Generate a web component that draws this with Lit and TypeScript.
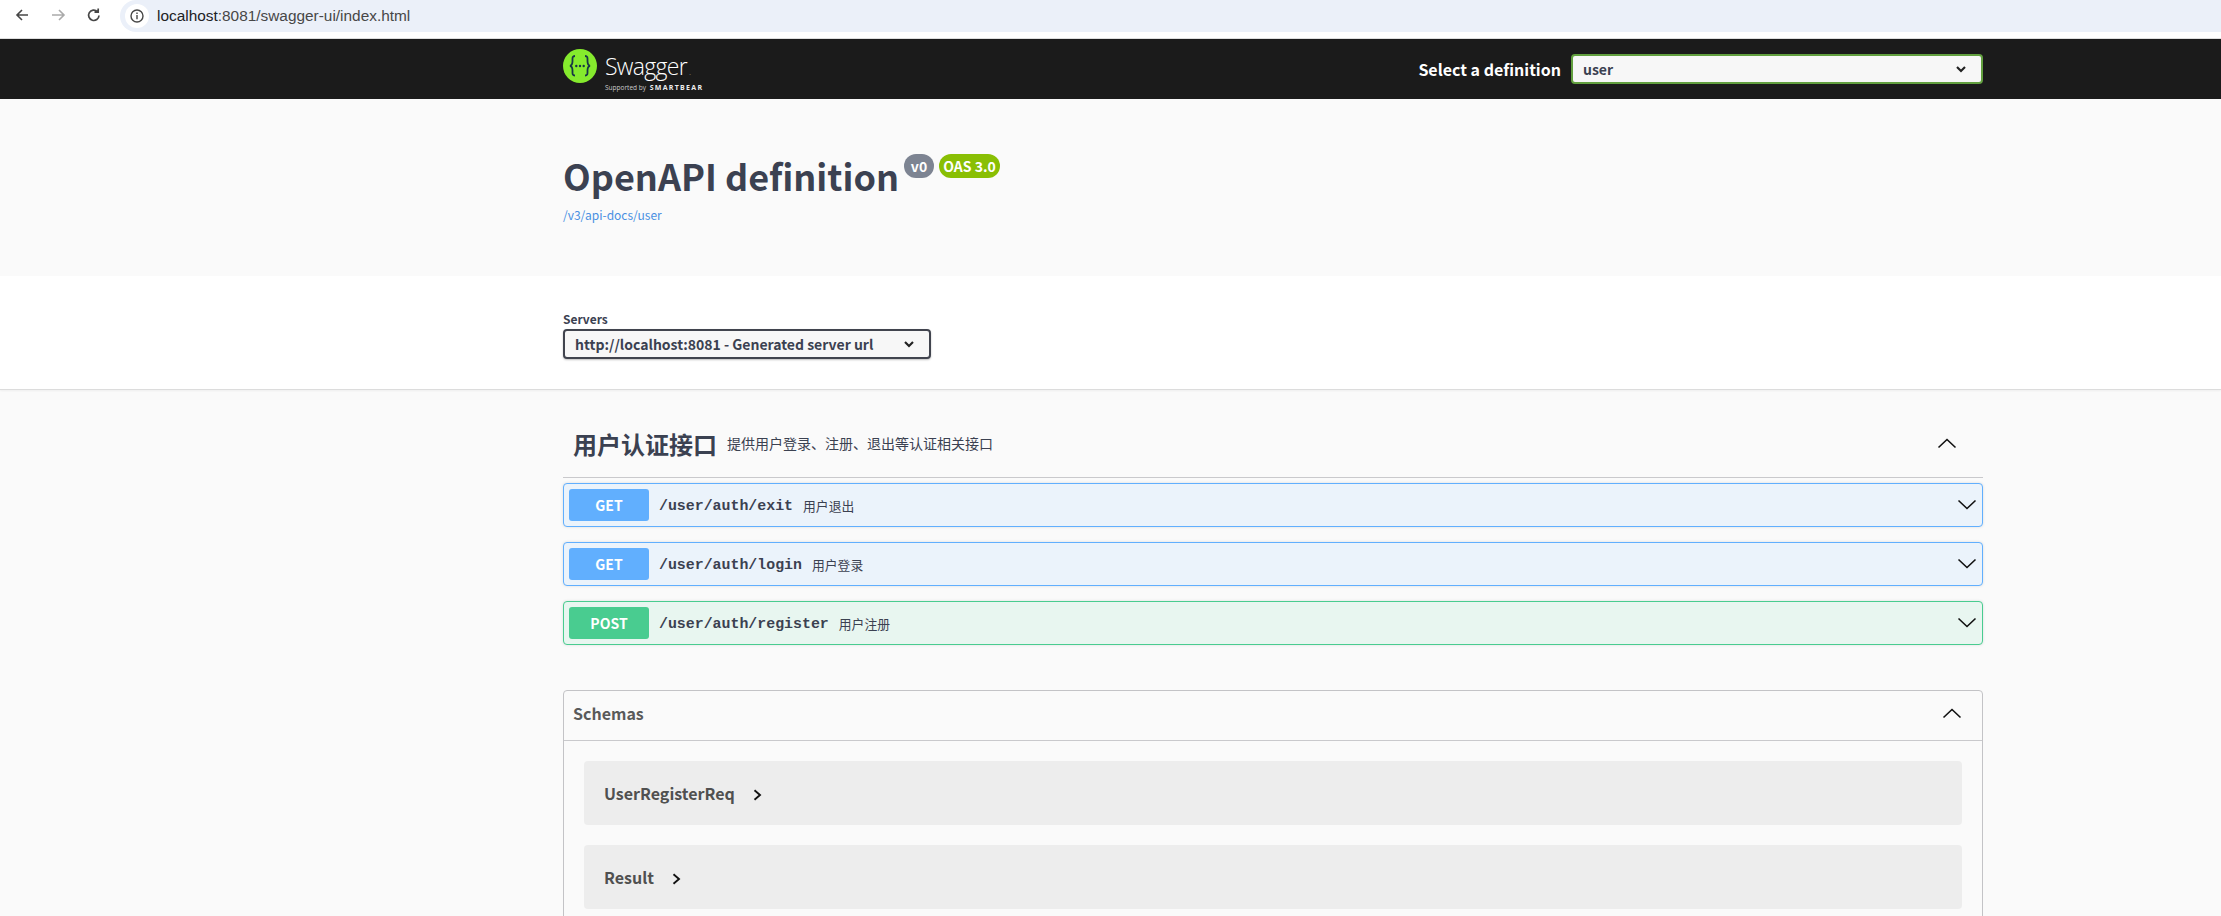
import { LitElement, html, css } from "lit";
import { customElement } from "lit/decorators.js";

const chevDown = html`<svg class="chev" viewBox="0 0 20 20"><path d="M1.5 5.5 L10 13.5 L18.5 5.5" fill="none" stroke="#111" stroke-width="1.6"/></svg>`;
const chevUp = html`<svg class="chev up" viewBox="0 0 20 20"><path d="M1.5 14.5 L10 6.5 L18.5 14.5" fill="none" stroke="#111" stroke-width="1.6"/></svg>`;
const small = html`<svg class="small" viewBox="0 0 12 12"><path d="M3 4.5 L6 7.5 L9 4.5" fill="none" stroke="#222" stroke-width="1.6"/></svg>`;
const right = html`<svg class="right" viewBox="0 0 12 12"><path d="M2.500 1.200 L8 6 L2.500 10.800" fill="none" stroke="#111" stroke-width="1.9"/></svg>`;

const ops = [
  { m: "GET", p: "/user/auth/exit", d: "用户退出", c: "get" },
  { m: "GET", p: "/user/auth/login", d: "用户登录", c: "get" },
  { m: "POST", p: "/user/auth/register", d: "用户注册", c: "post" },
];

@customElement("app-root")
export class AppRoot extends LitElement {
  static styles = css`
    :host { display: block; height: 916px; overflow: hidden; background: #fafafa; font-family: "Noto Sans CJK SC", "Noto Sans", sans-serif; color: #3b4151; }
    .browser { height: 38px; background: #fff; display: flex; align-items: flex-start; border-bottom: 1px solid #dedede; }
    .navs { display: flex; width: 120px; gap: 16px; padding: 5px 0 0 12px; box-sizing: border-box; flex: none; }
    .navs svg { width: 20px; height: 20px; flex: none; }
    .url { flex: 1; height: 32px; background: #ebf0f9; border-radius: 16px 0 0 16px; display: flex; align-items: center; font: 15.4px/32px "Liberation Sans", sans-serif; color: #202124; padding-left: 5px; }
    .info { width: 24px; height: 24px; border-radius: 50%; background: #fff; display: flex; align-items: center; justify-content: center; margin-right: 8px; }
    .info svg { width: 16px; height: 16px; }
    .rest { color: #474747; }
    .topbar { height: 60px; background: #1b1b1b; }
    .wrap { width: 1422px; margin-left: 561px; box-sizing: border-box; padding-left: 2px; }
    .topbar .wrap { height: 60px; display: flex; align-items: center; justify-content: space-between; }
    .logo { display: flex; align-items: flex-start; gap: 8px; color: #fff; }
    .logo svg { width: 34px; height: 34px; flex: none; margin-top: 3px; }
    .logo-text { display: flex; flex-direction: column; font-family: "Open Sans", sans-serif; }
    .logo-text .s { font-size: 23px; line-height: 26px; font-weight: 300; letter-spacing: -0.7px; margin-top: 7px; white-space: nowrap; }
    .logo-text .s i { font-style: normal; font-size: 9px; color: #999; margin-left: 2px; }
    .logo-text .b { font-size: 6.500px; line-height: 10px; white-space: nowrap; color: #ccc; margin-top: -2px; }
    .logo-text .b em { font-style: normal; font-weight: 700; letter-spacing: 1.300px; font-size: 7px; color: #eee; margin-left: 2px; }
    .select-def { display: flex; align-items: center; gap: 10px; color: #fff; font-size: 16px; font-weight: 700; }
    .def { width: 412px; height: 30px; box-sizing: border-box; border: 2px solid #62a03f; border-radius: 4px; background: #f7f7f7; color: #3b4151; display: flex; align-items: center; justify-content: space-between; padding: 0 12px 0 10px; font-size: 14px; font-weight: 700; }
    .small { width: 16px; height: 16px; flex: none; }
    .info-sec { height: 177px; padding-top: 52px; }
    .title-row { display: flex; align-items: flex-start; }
    h1 { margin: 0; font-size: 36px; line-height: 48px; font-weight: 700; color: #3b4151; }
    .badge { margin-top: 3px; height: 24px; border-radius: 12px; color: #fff; font-size: 14px; font-weight: 700; line-height: 24px; text-align: center; }
    .v0 { background: #7d8492; width: 30px; margin-left: 5px; }
    .oas { background: #89bf04; width: 61px; margin-left: 5px; }
    .link { font-size: 12px; line-height: 18px; color: #4990e2; margin-top: 7px; }
    .servers { background: #fff; height: 114px; box-sizing: border-box; padding-top: 35px; border-bottom: 1px solid #dcdcdc; box-shadow: 0 1px 2px rgba(0,0,0,.05); }
    .servers label { display: block; font-size: 12px; font-weight: 700; line-height: 16px; }
    .srv { margin-top: 2px; width: 368px; height: 30px; box-sizing: border-box; border: 2px solid #41444e; border-radius: 4px; background: #f7f7f7; display: flex; align-items: center; justify-content: space-between; padding: 0 12px 0 10px; font-size: 14px; font-weight: 700; box-shadow: 0 1px 2px rgba(0,0,0,.25); white-space: nowrap; }
    .tag { display: flex; align-items: center; height: 88px; box-sizing: border-box; padding: 20px 0 0 10px; border-bottom: 1px solid #c9c9cc; }
    .tag h3 { margin: 0; font-size: 24px; font-weight: 700; line-height: 32px; }
    .tag small { font-size: 14px; font-weight: 400; margin: -1px 0 0 10px; color: #3b4151; }
    .tag .sp { flex: 1; }
    .chev { width: 20px; height: 20px; flex: none; }
    .tag .chev { margin-right: 26px; margin-top: -1px; }
    .ops { display: flex; flex-direction: column; gap: 15px; padding-top: 5px; }
    .op { height: 44px; box-sizing: border-box; border: 1px solid; border-radius: 4px; display: flex; align-items: center; padding: 0 4px 0 5px; box-shadow: 0 0 3px rgba(0,0,0,.12); }
    .op.get { background: #ebf3fb; border-color: #61affe; }
    .op.post { background: #e8f6f0; border-color: #49cc90; }
    .m { width: 80px; height: 32px; border-radius: 3px; color: #fff; font-size: 14px; font-weight: 700; line-height: 32px; text-align: center; flex: none; }
    .get .m { background: #61affe; }
    .post .m { background: #49cc90; }
    .p { font-family: "Liberation Mono", monospace; font-size: 14.900px; font-weight: 700; margin: 1px 0 0 10px; color: #3b4151; }
    .d { font-size: 12.800px; margin-left: 10px; flex: 1; color: #3b4151; }
    .op .chev { margin-right: 1px; }
    .schemas { margin-top: 45px; border: 1px solid #c3c3c6; border-radius: 4px; height: 400px; }
    .sch-head { height: 49px; display: flex; align-items: center; justify-content: space-between; padding: 0 20px 0 9px; border-bottom: 1px solid #c9c9cc; font-size: 16px; font-weight: 700; color: #5a5a5a; }
    .sch-head span { margin-top: -5px; }
    .sch-head .chev { margin-top: -5px; }
    .sch-body { padding: 20px; display: flex; flex-direction: column; gap: 20px; }
    .sch { height: 64px; background: #ededed; border-radius: 4px; display: flex; align-items: center; padding-left: 20px; font-size: 16px; font-weight: 700; color: #505050; }
    .right { width: 12px; height: 12px; margin: 3px 0 0 17px; }
  `;

  render() {
    return html`
      <div class="browser">
        <div class="navs">
          <svg viewBox="0 0 20 20"><path d="M16 10H5M10 5l-5 5 5 5" fill="none" stroke="#474747" stroke-width="1.6"/></svg>
          <svg viewBox="0 0 20 20"><path d="M4 10h12M11 5l5 5-5 5" fill="none" stroke="#aaa" stroke-width="1.6"/></svg>
          <svg viewBox="0 0 20 20"><path d="M15 10.500a5.200 5.200 0 1 1-1.600-4M14.200 3.500v3.700h-3.700" fill="none" stroke="#474747" stroke-width="1.700"/></svg>
        </div>
        <div class="url">
          <div class="info"><svg viewBox="0 0 16 16"><circle cx="8" cy="8" r="6" fill="none" stroke="#474747" stroke-width="1.4"/><path d="M8 7v4.200M8 4.600v1.500" stroke="#474747" stroke-width="1.4"/></svg></div>
          <span>localhost</span><span class="rest">:8081/swagger-ui/index.html</span>
        </div>
      </div>
      <div class="topbar"><div class="wrap">
        <div class="logo">
          <svg viewBox="0 0 34 34"><circle cx="17" cy="17" r="17" fill="#85ea2d"/><g fill="none" stroke="#173646" stroke-width="1.800"><path d="M12 7c-3 0-2.500 2-2.500 5s-.3 4.300-2.500 4.800c2.200.5 2.500 1.700 2.500 4.700s-.5 5 2.500 5M22 7c3 0 2.500 2 2.500 5s.3 4.300 2.500 4.800c-2.200.5-2.500 1.700-2.500 4.700s.5 5-2.500 5"/></g><g fill="#173646"><circle cx="13.300" cy="17" r="1.200"/><circle cx="17" cy="17" r="1.200"/><circle cx="20.700" cy="17" r="1.200"/></g></svg>
          <div class="logo-text"><span class="s">Swagger<i>.</i></span><span class="b">Supported by <em>SMARTBEAR</em></span></div>
        </div>
        <div class="select-def"><span>Select a definition</span><div class="def"><span>user</span>${small}</div></div>
      </div></div>
      <div class="wrap info-sec">
        <div class="title-row"><h1>OpenAPI definition</h1><div class="badge v0">v0</div><div class="badge oas">OAS 3.0</div></div>
        <div class="link">/v3/api-docs/user</div>
      </div>
      <div class="servers"><div class="wrap">
        <label>Servers</label>
        <div class="srv"><span>http://localhost:8081 - Generated server url</span>${small}</div>
      </div></div>
      <div class="wrap">
        <div class="tag"><h3>用户认证接口</h3><small>提供用户登录、注册、退出等认证相关接口</small><span class="sp"></span>${chevUp}</div>
        <div class="ops">
          ${ops.map(o => html`<div class="op ${o.c}"><div class="m">${o.m}</div><span class="p">${o.p}</span><span class="d">${o.d}</span>${chevDown}</div>`)}
        </div>
        <div class="schemas">
          <div class="sch-head"><span>Schemas</span>${chevUp}</div>
          <div class="sch-body">
            <div class="sch">UserRegisterReq${right}</div>
            <div class="sch">Result${right}</div>
          </div>
        </div>
      </div>
    `;
  }
}
